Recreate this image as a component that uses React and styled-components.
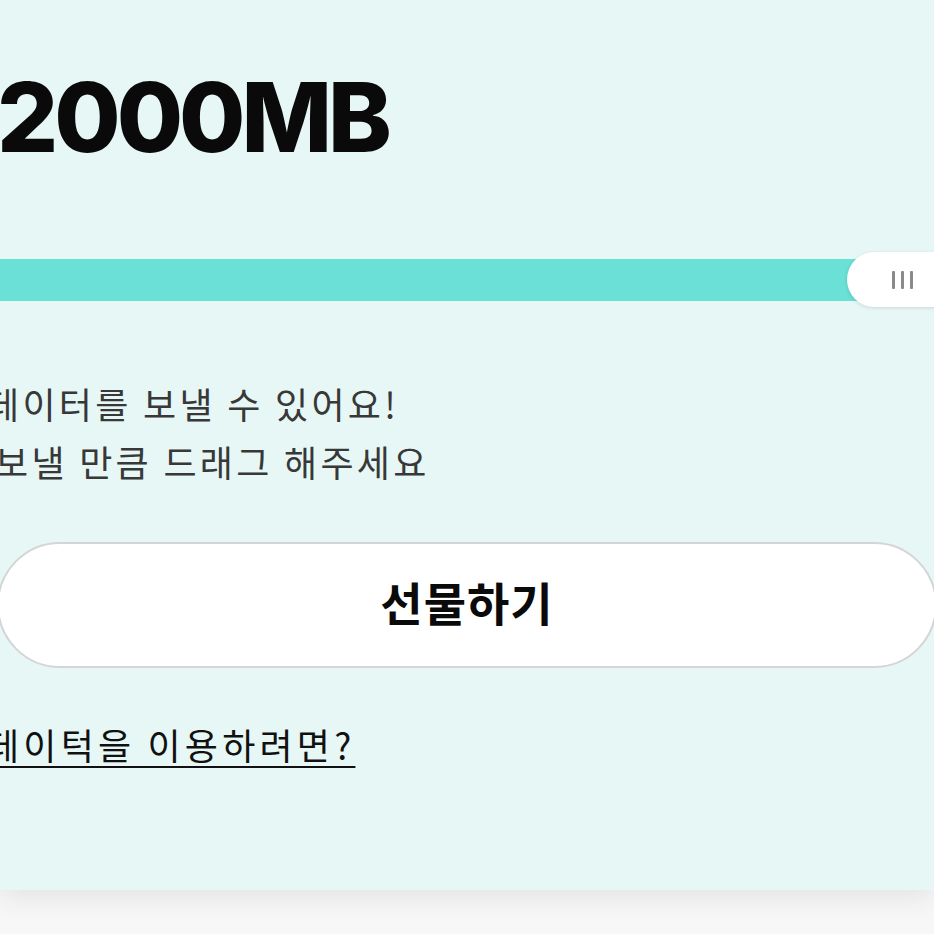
import React from "react";
import styled, { createGlobalStyle } from "styled-components";

const Global = createGlobalStyle`
  html, body { margin: 0; padding: 0; background: #f7f7f7; }
  body { width: 934px; height: 934px; overflow: hidden; font-family: "Noto Sans CJK KR", "Noto Sans", sans-serif; }
`;

const Panel = styled.section`
  width: 934px;
  height: 890px;
  background: #e6f7f5;
  box-shadow: 0 6px 28px rgba(0, 0, 0, 0.09);
  display: flex;
  flex-direction: column;
  overflow: hidden;
  position: relative;
`;

const Amount = styled.h1`
  margin: 69px 0 0 -3px;
  font-family: Inter, "Noto Sans", sans-serif;
  font-weight: 800;
  font-size: 96px;
  line-height: 96px;
  letter-spacing: -4px;
  color: #0a0a0a;
`;

const Slider = styled.div`
  position: relative;
  height: 56px;
  margin-top: 87px;
`;

const Track = styled.div`
  position: absolute;
  top: 7px;
  left: -20px;
  width: 900px;
  height: 42px;
  border-radius: 21px;
  background: #6ae0d6;
`;

const Thumb = styled.div`
  position: absolute;
  top: 0;
  left: 847px;
  width: 140px;
  height: 55px;
  border-radius: 28px;
  background: #ffffff;
  box-shadow: 0 1px 4px rgba(0, 0, 0, 0.12);
  display: flex;
  align-items: center;
  gap: 6px;
  padding-left: 45px;
  box-sizing: border-box;
`;

const Grip = styled.span`
  width: 3px;
  height: 18px;
  background: #8a8a8a;
  border-radius: 1px;
`;

const Message = styled.div`
  margin: 66px 0 0 -14px;
  display: flex;
  flex-direction: column;
  color: #383838;
  font-size: 36px;
  line-height: 58px;
  letter-spacing: 3.3px;
`;

const Line = styled.span`
  padding-left: ${(p) => p.$indent || 0}px;
  white-space: nowrap;
`;

const GiftButton = styled.button`
  margin: 52px -3px 0 -3px;
  height: 126px;
  padding: 0 0 8px 0;
  border-radius: 63px;
  border: 2px solid #d4d6d6;
  background: #ffffff;
  font-family: "Noto Sans CJK KR", sans-serif;
  font-weight: 700;
  font-size: 46px;
  color: #0a0a0a;
  letter-spacing: 1px;
  display: flex;
  align-items: center;
  justify-content: center;
`;

const HelpLink = styled.a`
  margin: 52px 0 0 -14px;
  align-self: flex-start;
  font-size: 36px;
  line-height: 48px;
  color: #111;
  text-decoration: underline;
  text-decoration-thickness: 2px;
  text-underline-offset: 6px;
  letter-spacing: 4.2px;
  white-space: nowrap;
`;

export default function App() {
  return (
    <>
      <Global />
      <Panel>
        <Amount>2000MB</Amount>
        <Slider>
          <Track />
          <Thumb>
            <Grip />
            <Grip />
            <Grip />
          </Thumb>
        </Slider>
        <Message>
          <Line>데이터를 보낼 수 있어요!</Line>
          <Line $indent={9}>보낼 만큼 드래그 해주세요</Line>
        </Message>
        <GiftButton>선물하기</GiftButton>
        <HelpLink>데이턱을 이용하려면?</HelpLink>
      </Panel>
    </>
  );
}
